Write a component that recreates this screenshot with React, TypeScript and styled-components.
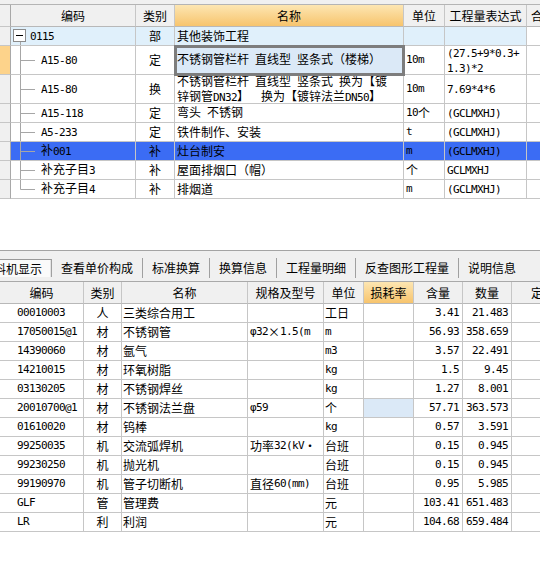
import React from 'react';
import styled, { createGlobalStyle, css } from 'styled-components';

const Global = createGlobalStyle`
  html, body { margin: 0; padding: 0; background: #fff; }
  body {
    font-family: "Noto Sans CJK SC", "Noto Sans", sans-serif;
    font-size: 12px;
    color: #000;
  }
  * { box-sizing: border-box; }
`;

const GRID = '#c6c6c6';
const HEAD_BG = '#f0f0f0';
const ROOT_BG = '#e0f0fb';
const SEL_BG = '#dbe9f7';
const HL_BG = '#3b6cf4';
const ORANGE = 'linear-gradient(#fde6b2, #f7c46d)';

const Page = styled.div`
  width: 540px;
  height: 582px;
  overflow: hidden;
  display: flex;
  flex-direction: column;
  background: #fff;
`;

const TopPane = styled.div`
  height: 250px;
  display: flex;
  flex-direction: column;
  overflow: hidden;
`;

const TopStrip = styled.div`
  height: 5px;
  flex: none;
  background: #f0f0f0;
  border-bottom: 1px solid #b4b4b4;
`;

const topCols = '11px 125px 39px 229px 41px 82px 80px';
const botCols = '84px 38px 126px 76px 40px 50px 49px 49px 80px';

const Row = styled.div<{ $h: number; $cols: string }>`
  display: grid;
  grid-template-columns: ${p => p.$cols};
  height: ${p => p.$h}px;
  flex: none;
`;

type Align = 'left' | 'center' | 'right';

const Cell = styled.div<{ $align?: Align; $bg?: string; $pl?: number }>`
  display: flex;
  align-items: center;
  justify-content: ${p =>
    p.$align === 'center' ? 'center' : p.$align === 'right' ? 'flex-end' : 'flex-start'};
  padding: 0 ${p => (p.$align === 'right' ? 3 : 2)}px 0 ${p => p.$pl ?? 2}px;
  border-right: 1px solid ${GRID};
  border-bottom: 1px solid ${GRID};
  background: ${p => p.$bg ?? 'transparent'};
  overflow: hidden;
  white-space: nowrap;
  line-height: 12px;
  min-width: 0;
`;

const HeadCell = styled(Cell)<{ $orange?: boolean; $pad?: number }>`
  background: ${p => (p.$orange ? ORANGE : HEAD_BG)};
  justify-content: ${p => (p.$pad !== undefined ? 'flex-start' : 'center')};
  padding: 0 0 0 ${p => p.$pad ?? 0}px;
  border-bottom-color: #b8b8b8;
`;

const RowHead = styled.div<{ $active?: boolean }>`
  background: ${p => (p.$active ? '#fdd38b' : HEAD_BG)};
  border-right: 1px solid #a8a8a8;
  border-bottom: 1px solid ${GRID};
`;

const SelectedCell = styled(Cell)`
  position: relative;
  z-index: 1;
  outline: 3px solid #7d7d7d;
  outline-offset: -2px;
`;

const Lines = styled.div`
  display: flex;
  flex-direction: column;
  line-height: 13px;
`;

const Latin = styled.span`
  font-family: "DejaVu Sans Mono", "Liberation Mono", monospace;
  font-size: 11px;
  letter-spacing: -0.62px;
`;

const TreeSvg = styled.svg`
  flex: none;
  display: block;
`;

const CJK = /[\u2E80-\u9FFF\u3000-\u303F\uFF00-\uFFEF\u00D7\u00B7]/;

function Txt({ s }: { s: string }) {
  const parts: { cjk: boolean; t: string }[] = [];
  for (const ch of s) {
    const c = CJK.test(ch);
    const last = parts[parts.length - 1];
    if (last && last.cjk === c) last.t += ch;
    else parts.push({ cjk: c, t: ch });
  }
  return (
    <>
      {parts.map((p, i) =>
        p.cjk ? <span key={i}>{p.t}</span> : <Latin key={i}>{p.t.replace(/ /g, '\u00a0')}</Latin>
      )}
    </>
  );
}

function Multi({ lines }: { lines: string[] }) {
  if (lines.length === 1) return <span><Txt s={lines[0]} /></span>;
  return (
    <Lines>
      {lines.map((l, i) => (
        <span key={i}><Txt s={l} /></span>
      ))}
    </Lines>
  );
}

type TreeKind = 'root' | 'mid' | 'last';

function Tree({ kind, h }: { kind: TreeKind; h: number }) {
  const ch = h - 1;
  if (kind === 'root') {
    return (
      <TreeSvg width={19} height={ch} viewBox={`0 0 19 ${ch}`}>
        <line x1={9.5} y1={15} x2={9.5} y2={ch} stroke="#a6a6a6" />
        <rect x={2.5} y={2.5} width={12} height={12} fill="#fff" stroke="#8c8c8c" />
        <line x1={5} y1={8.5} x2={12} y2={8.5} stroke="#000" />
      </TreeSvg>
    );
  }
  const mid = Math.floor(ch / 2) + 0.5;
  return (
    <TreeSvg width={30} height={ch} viewBox={`0 0 30 ${ch}`}>
      <line x1={9.5} y1={0} x2={9.5} y2={kind === 'last' ? mid : ch} stroke="#a6a6a6" />
      <line x1={9.5} y1={mid} x2={24} y2={mid} stroke="#a6a6a6" />
    </TreeSvg>
  );
}

type TopItem = {
  code: string;
  kind: TreeKind;
  type: string;
  name: string[];
  unit: string;
  expr: string[];
  h: number;
  tone?: 'root' | 'hl';
  selected?: boolean;
};

const topItems: TopItem[] = [
  { code: '0115', kind: 'root', type: '部', name: ['其他装饰工程'], unit: '', expr: [''], h: 19, tone: 'root' },
  {
    code: 'A15-80', kind: 'mid', type: '定', name: ['不锈钢管栏杆 直线型 竖条式（楼梯）'], unit: '10m',
    expr: ['(27.5+9*0.3+', '1.3)*2'], h: 29, selected: true,
  },
  {
    code: 'A15-80', kind: 'mid', type: '换',
    name: ['不锈钢管栏杆 直线型 竖条式 换为【镀', '锌钢管DN32】  换为【镀锌法兰DN50】'],
    unit: '10m', expr: ['7.69*4*6'], h: 29,
  },
  { code: 'A15-118', kind: 'mid', type: '定', name: ['弯头 不锈钢'], unit: '10个', expr: ['(GCLMXHJ)'], h: 19 },
  { code: 'A5-233', kind: 'mid', type: '定', name: ['铁件制作、安装'], unit: 't', expr: ['(GCLMXHJ)'], h: 19 },
  { code: '补001', kind: 'mid', type: '补', name: ['灶台制安'], unit: 'm', expr: ['(GCLMXHJ)'], h: 19, tone: 'hl' },
  { code: '补充子目3', kind: 'mid', type: '补', name: ['屋面排烟口（帽）'], unit: '个', expr: ['GCLMXHJ'], h: 19 },
  { code: '补充子目4', kind: 'last', type: '补', name: ['排烟道'], unit: 'm', expr: ['(GCLMXHJ)'], h: 19 },
];

type BotItem = [string, string, string, string, string, string, string, string];

const botItems: BotItem[] = [
  ['00010003', '人', '三类综合用工', '', '工日', '', '3.41', '21.483'],
  ['17050015@1', '材', '不锈钢管', 'φ32×1.5(m', 'm', '', '56.93', '358.659'],
  ['14390060', '材', '氩气', '', 'm3', '', '3.57', '22.491'],
  ['14210015', '材', '环氧树脂', '', 'kg', '', '1.5', '9.45'],
  ['03130205', '材', '不锈钢焊丝', '', 'kg', '', '1.27', '8.001'],
  ['20010700@1', '材', '不锈钢法兰盘', 'φ59', '个', '', '57.71', '363.573'],
  ['01610020', '材', '钨棒', '', 'kg', '', '0.57', '3.591'],
  ['99250035', '机', '交流弧焊机', '功率32(kV·', '台班', '', '0.15', '0.945'],
  ['99230250', '机', '抛光机', '', '台班', '', '0.15', '0.945'],
  ['99190970', '机', '管子切断机', '直径60(mm)', '台班', '', '0.95', '5.985'],
  ['GLF', '管', '管理费', '', '元', '', '103.41', '651.483'],
  ['LR', '利', '利润', '', '元', '', '104.68', '659.484'],
];

const TabBar = styled.div`
  height: 32px;
  flex: none;
  background: #f0f0f0;
  border-top: 1px solid #a4a4a4;
  border-bottom: 1px solid #a9a9a9;
  display: flex;
  align-items: flex-start;
  padding-top: 7px;
  overflow: hidden;
`;

const TabStrip = styled.div`
  display: flex;
  align-items: flex-start;
  margin-left: -27px;
`;

const Tab = styled.div<{ $active?: boolean; $last?: boolean }>`
  height: 20px;
  padding: 0 9px;
  display: flex;
  align-items: center;
  border-right: 1px solid ${p => (p.$last ? 'transparent' : '#a0a0a0')};
  white-space: nowrap;
  line-height: 12px;
  ${p =>
    p.$active &&
    css`
      margin-top: 1px;
      height: 18px;
      background: #fafafa;
      border-top: 1px solid #9a9a9a;
      box-shadow: inset -1px 0 0 #e4e4e4;
    `}
`;

const BottomPane = styled.div`
  flex: 1;
  display: flex;
  flex-direction: column;
  overflow: hidden;
`;

const tabs = ['工料机显示', '查看单价构成', '标准换算', '换算信息', '工程量明细', '反查图形工程量', '说明信息'];

export default function App() {
  return (
    <Page>
      <Global />
      <TopPane>
        <TopStrip />
        <Row $h={22} $cols={topCols}>
          <RowHead />
          <HeadCell>编码</HeadCell>
          <HeadCell>类别</HeadCell>
          <HeadCell $orange>名称</HeadCell>
          <HeadCell>单位</HeadCell>
          <HeadCell>工程量表达式</HeadCell>
          <HeadCell $pad={4}>合价</HeadCell>
        </Row>
        {topItems.map((it, i) => {
          const rowBg = it.tone === 'hl' ? HL_BG : it.tone === 'root' ? ROOT_BG : undefined;
          const lastBg = it.tone === 'hl' ? HL_BG : undefined;
          const NameCell = it.selected ? SelectedCell : Cell;
          return (
            <Row key={i} $h={it.h} $cols={topCols}>
              <RowHead $active={it.selected} />
              <Cell $bg={rowBg} $pl={0}>
                <Tree kind={it.kind} h={it.h} />
                <span><Txt s={it.code} /></span>
              </Cell>
              <Cell $bg={rowBg} $align="center">{it.type}</Cell>
              <NameCell $bg={it.selected ? SEL_BG : rowBg}>
                <Multi lines={it.name} />
              </NameCell>
              <Cell $bg={rowBg}><Txt s={it.unit} /></Cell>
              <Cell $bg={rowBg}><Multi lines={it.expr} /></Cell>
              <Cell $bg={lastBg} />
            </Row>
          );
        })}
      </TopPane>
      <TabBar>
        <TabStrip>
          {tabs.map((t, i) => (
            <Tab key={t} $active={i === 0} $last={i === tabs.length - 1}>{t}</Tab>
          ))}
        </TabStrip>
      </TabBar>
      <BottomPane>
        <Row $h={22} $cols={botCols}>
          <HeadCell>编码</HeadCell>
          <HeadCell>类别</HeadCell>
          <HeadCell>名称</HeadCell>
          <HeadCell>规格及型号</HeadCell>
          <HeadCell>单位</HeadCell>
          <HeadCell $orange>损耗率</HeadCell>
          <HeadCell>含量</HeadCell>
          <HeadCell>数量</HeadCell>
          <HeadCell $pad={19}>定额价</HeadCell>
        </Row>
        {botItems.map((r, i) => (
          <Row key={i} $h={19} $cols={botCols}>
            <Cell $pl={17}><Txt s={r[0]} /></Cell>
            <Cell $align="center">{r[1]}</Cell>
            <Cell $pl={1}><Txt s={r[2]} /></Cell>
            <Cell><Txt s={r[3]} /></Cell>
            <Cell $pl={1}><Txt s={r[4]} /></Cell>
            <Cell $bg={i === 5 ? SEL_BG : undefined} />
            <Cell $align="right"><Txt s={r[6]} /></Cell>
            <Cell $align="right"><Txt s={r[7]} /></Cell>
            <Cell />
          </Row>
        ))}
      </BottomPane>
    </Page>
  );
}
